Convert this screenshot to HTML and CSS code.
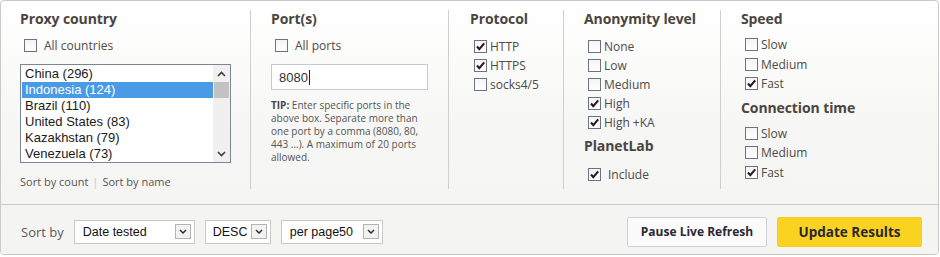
FILE: index.html
```html
<!DOCTYPE html>
<html>
<head>
<meta charset="utf-8">
<link rel="stylesheet" href="styles.css">
</head>
<body>
<div class="panel">
  <div class="filters">
    <div class="col col-country">
      <h3 class="title">Proxy country</h3>
      <div class="check check-wide"><span class="cb"></span>All countries</div>
      <div class="listbox">
        <ul class="options">
          <li>China (296)</li>
          <li class="sel">Indonesia (124)</li>
          <li>Brazil (110)</li>
          <li>United States (83)</li>
          <li>Kazakhstan (79)</li>
          <li>Venezuela (73)</li>
        </ul>
        <div class="scroll">
          <span class="sarrow"><svg width="9" height="6" viewBox="0 0 9 6"><path d="M1 5 L4.5 1.5 L8 5" fill="none" stroke="#404040" stroke-width="1.6"/></svg></span>
          <span class="thumb"></span>
          <span class="sfill"></span>
          <span class="sarrow"><svg width="9" height="6" viewBox="0 0 9 6"><path d="M1 1 L4.5 4.5 L8 1" fill="none" stroke="#404040" stroke-width="1.6"/></svg></span>
        </div>
      </div>
      <div class="sortlinks"><a>Sort by count</a><span class="pipe">|</span><a>Sort by name</a></div>
    </div>

    <div class="col col-ports">
      <h3 class="title">Port(s)</h3>
      <div class="check check-wide"><span class="cb"></span>All ports</div>
      <div class="portinput">8080<span class="caret"></span></div>
      <p class="tip"><b>TIP:</b> Enter specific ports in the above box. Separate more than one port by a comma (8080, 80, 443 ...). A maximum of 20 ports allowed.</p>
    </div>

    <div class="col col-protocol">
      <h3 class="title">Protocol</h3>
      <div class="checks">
        <div class="check"><span class="cb on"><svg width="11" height="11" viewBox="0 0 11 11"><path d="M2 5.5 L4.3 8.2 L9.2 2.3" fill="none" stroke="#2a1a26" stroke-width="2.1"/></svg></span>HTTP</div>
        <div class="check"><span class="cb on"><svg width="11" height="11" viewBox="0 0 11 11"><path d="M2 5.5 L4.3 8.2 L9.2 2.3" fill="none" stroke="#2a1a26" stroke-width="2.1"/></svg></span>HTTPS</div>
        <div class="check"><span class="cb"></span>socks4/5</div>
      </div>
    </div>

    <div class="col col-anon">
      <h3 class="title">Anonymity level</h3>
      <div class="checks">
        <div class="check"><span class="cb"></span>None</div>
        <div class="check"><span class="cb"></span>Low</div>
        <div class="check"><span class="cb"></span>Medium</div>
        <div class="check"><span class="cb on"><svg width="11" height="11" viewBox="0 0 11 11"><path d="M2 5.5 L4.3 8.2 L9.2 2.3" fill="none" stroke="#2a1a26" stroke-width="2.1"/></svg></span>High</div>
        <div class="check"><span class="cb on"><svg width="11" height="11" viewBox="0 0 11 11"><path d="M2 5.5 L4.3 8.2 L9.2 2.3" fill="none" stroke="#2a1a26" stroke-width="2.1"/></svg></span>High +KA</div>
      </div>
      <h3 class="title sub">PlanetLab</h3>
      <div class="checks checks-planet">
        <div class="check check-include"><span class="cb on"><svg width="11" height="11" viewBox="0 0 11 11"><path d="M2 5.5 L4.3 8.2 L9.2 2.3" fill="none" stroke="#2a1a26" stroke-width="2.1"/></svg></span>Include</div>
      </div>
    </div>

    <div class="col col-speed">
      <h3 class="title">Speed</h3>
      <div class="checks checks-speed">
        <div class="check"><span class="cb"></span>Slow</div>
        <div class="check"><span class="cb"></span>Medium</div>
        <div class="check"><span class="cb on"><svg width="11" height="11" viewBox="0 0 11 11"><path d="M2 5.5 L4.3 8.2 L9.2 2.3" fill="none" stroke="#2a1a26" stroke-width="2.1"/></svg></span>Fast</div>
      </div>
      <h3 class="title sub2">Connection time</h3>
      <div class="checks checks-speed">
        <div class="check"><span class="cb"></span>Slow</div>
        <div class="check"><span class="cb"></span>Medium</div>
        <div class="check"><span class="cb on"><svg width="11" height="11" viewBox="0 0 11 11"><path d="M2 5.5 L4.3 8.2 L9.2 2.3" fill="none" stroke="#2a1a26" stroke-width="2.1"/></svg></span>Fast</div>
      </div>
    </div>
  </div>

  <div class="actions">
    <span class="sortlabel">Sort by</span>
    <div class="dd dd-date"><span>Date tested</span><span class="ddarrow"><svg width="8" height="5" viewBox="0 0 8 5"><path d="M1 1 L4 4 L7 1" fill="none" stroke="#333" stroke-width="1.5"/></svg></span></div>
    <div class="dd dd-order"><span>DESC</span><span class="ddarrow"><svg width="8" height="5" viewBox="0 0 8 5"><path d="M1 1 L4 4 L7 1" fill="none" stroke="#333" stroke-width="1.5"/></svg></span></div>
    <div class="dd dd-page"><span>per page50</span><span class="ddarrow"><svg width="8" height="5" viewBox="0 0 8 5"><path d="M1 1 L4 4 L7 1" fill="none" stroke="#333" stroke-width="1.5"/></svg></span></div>
    <span class="spacer"></span>
    <button class="btn btn-pause">Pause Live Refresh</button>
    <button class="btn btn-update">Update Results</button>
  </div>
</div>
</body>
</html>
```

FILE: styles.css
```css
* { box-sizing: border-box; }
html, body { margin: 0; padding: 0; background: #fff; }
body { font-family: "Open Sans", "DejaVu Sans", sans-serif; color: #555; }

.panel {
  width: 939px;
  height: 255px;
  border: 1px solid #c9c9c9;
  border-radius: 4px;
  background: linear-gradient(#ffffff 0px, #fbfbfa 60px, #f6f6f4 130px, #f5f5f3 203px);
  display: flex;
  flex-direction: column;
  overflow: hidden;
}

.filters {
  display: flex;
  height: 203px;
  padding-top: 9px;
  align-items: flex-start;
}

.col {
  height: 179px;
  padding: 0 20px;
}
.col + .col { border-left: 1px solid #cfcfcf; }
.col-country { width: 249px; padding-left: 19px; padding-right: 19px; }
.col-ports { width: 198px; padding-left: 20px; }
.col-protocol { width: 115px; padding-left: 21px; }
.col-anon { width: 157px; padding-left: 20px; }
.col-speed { flex: 1; padding-left: 20px; }

.title {
  margin: 0;
  font-size: 14px;
  line-height: 18px;
  font-weight: 700;
  color: #4b4541;
  letter-spacing: -0.1px;
}
.title.sub { margin-top: 5px; }
.title.sub2 { margin-top: 5px; }

.check {
  display: flex;
  align-items: center;
  height: 19px;
  font-size: 12px;
  color: #4f4a47;
  padding-left: 4px;
}
.check-wide { margin-top: 10px; height: 14px; }
.check-wide .cb { margin-right: 7px; }
.checks { margin-top: 9px; }
.checks-speed { margin-top: 7px; }
.checks-speed .check { height: 19.5px; }
.col-protocol .checks, .col-anon .checks:first-of-type { margin-top: 9px; }
.check-include .cb { margin-right: 7px; }
.col-anon .checks-planet { margin-top: 10px; }

.cb {
  width: 13px;
  height: 13px;
  border: 1px solid #6b7382;
  background: linear-gradient(#f4f4f4, #ffffff);
  margin-right: 3px;
  display: inline-flex;
  align-items: center;
  justify-content: center;
  flex: none;
}
.cb svg { display: block; }

.listbox {
  margin-top: 12px;
  width: 211px;
  height: 99px;
  border: 1px solid #7b8595;
  background: #fff;
  display: flex;
  overflow: hidden;
}
.options {
  list-style: none;
  margin: 0;
  padding: 1px 0 0 1px;
  flex: 1;
  font-family: "Liberation Sans", Arial, sans-serif;
  font-size: 13px;
  color: #1a1a1a;
}
.options li {
  height: 16px;
  line-height: 16px;
  padding-left: 3px;
  white-space: nowrap;
}
.options li.sel { background: #4a9be6; color: #fff; }
.scroll {
  width: 17px;
  background: #f0f0f0;
  display: flex;
  flex-direction: column;
  align-items: center;
}
.sarrow { height: 17px; display: flex; align-items: center; justify-content: center; }
.thumb { width: 15px; height: 16px; background: #c2c2c2; }
.sfill { flex: 1; }

.sortlinks {
  margin-top: 12px;
  font-size: 11px;
  color: #5a5552;
  line-height: 14px;
}
.sortlinks .pipe { color: #c8c8c8; margin: 0 4px; }

.portinput {
  margin-top: 12px;
  width: 157px;
  height: 26px;
  border: 1px solid #c9c9c9;
  background: #fff;
  font-family: "Liberation Sans", Arial, sans-serif;
  font-size: 13px;
  color: #333;
  padding-left: 7px;
  display: flex;
  align-items: center;
}
.caret { width: 1px; height: 15px; background: #222; margin-left: 1px; }

.tip {
  margin: 9px 0 0;
  font-size: 10px;
  line-height: 13px;
  color: #555;
}
.tip b { color: #444; }

.actions {
  flex: 1;
  border-top: 1px solid #cbcbcb;
  background: #f4f4f2;
  display: flex;
  align-items: center;
  padding: 4px 16px 0 20px;
}
.sortlabel { font-size: 13px; color: #5a5a5a; margin-right: 10px; }
.dd {
  height: 24px;
  border: 1px solid #c9c9c9;
  background: #fff;
  display: flex;
  align-items: center;
  justify-content: space-between;
  padding: 0 3px 0 8px;
  font-family: "Liberation Sans", Arial, sans-serif;
  font-size: 12.5px;
  color: #111;
  margin-right: 10px;
}
.dd-date { width: 121px; }
.dd-order { width: 66px; padding-left: 7px; }
.dd-page { width: 102px; }
.ddarrow {
  width: 16px;
  height: 15px;
  border: 1px solid #b3b3b3;
  background: #f2f2f2;
  display: flex;
  align-items: center;
  justify-content: center;
}
.ddarrow svg { display: block; }
.spacer { flex: 1; }
.btn {
  height: 30px;
  border-radius: 2px;
  font-family: "Open Sans", "DejaVu Sans", sans-serif;
  font-weight: 700;
  color: #2b2733;
  cursor: pointer;
  padding: 0;
}
.btn-pause {
  width: 140px;
  border: 1px solid #cfcfcf;
  background: #fbfbfb;
  font-size: 12px;
  margin-right: 10px;
}
.btn-update {
  width: 145px;
  border: 1px solid #f5cf1a;
  background: #fad321;
  font-size: 13.5px;
}
```
